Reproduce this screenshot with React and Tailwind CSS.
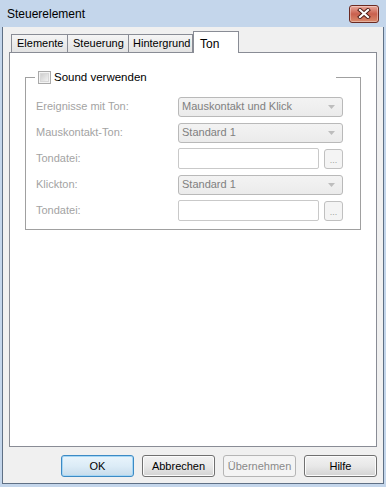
import React from "react";

function CloseBtn() {
  return (
    <div className="w-[30px] h-[18px] rounded-[3px] border border-[#6b2a22] bg-gradient-to-b from-[#e8a89c] via-[#c9604e] to-[#d98a6c] flex items-center justify-center shadow-[inset_0_0_0_1px_rgba(255,255,255,0.35)]">
      <svg width="14" height="11" viewBox="0 0 14 11">
        <path d="M3 2 L11 9 M11 2 L3 9" stroke="#4a1a14" strokeWidth="4" strokeLinecap="square" />
        <path d="M3 2 L11 9 M11 2 L3 9" stroke="#ffffff" strokeWidth="2.2" strokeLinecap="square" />
      </svg>
    </div>
  );
}

function Combo({ text }) {
  return (
    <div className="w-[165px] h-[20px] border border-[#b9b9b9] rounded-[3px] bg-gradient-to-b from-[#f3f3f3] to-[#ebebeb] flex items-center justify-between pl-[3px] pr-[7px]">
      <span className="text-[#808080]">{text}</span>
      <svg width="7" height="4" viewBox="0 0 7 4">
        <path d="M0 0 L7 0 L3.5 4 Z" fill="#bdbdbd" />
      </svg>
    </div>
  );
}

function FileRow() {
  return (
    <div className="flex items-center">
      <div className="w-[141px] h-[21px] border border-[#c9c9c9] rounded-[2px] bg-white" />
      <div className="ml-[5px] w-[19px] h-[20px] border border-[#c0c0c0] rounded-[3px] bg-[#f4f4f4] flex items-end justify-center pb-[3px]">
        <span className="text-[#a0a0a0] text-[9px] leading-[9px]">...</span>
      </div>
    </div>
  );
}

function Row({ label, children }) {
  return (
    <div className="flex items-center h-[21px]">
      <span className="w-[142px] text-[#a3a3a3]">{label}</span>
      {children}
    </div>
  );
}

function Btn({ children, kind }) {
  if (kind === "default") {
    return (
      <div className="w-[73px] h-[22px] rounded-[3px] border border-[#3c8ac4] bg-gradient-to-b from-[#e9f4fb] via-[#dcecf7] to-[#c7dceb] shadow-[inset_0_0_0_1px_#a5d6f5] flex items-center justify-center">
        {children}
      </div>
    );
  }
  if (kind === "disabled") {
    return (
      <div className="w-[73px] h-[22px] rounded-[3px] border border-[#b5b5b5] bg-[#f4f4f4] flex items-center justify-center text-[#8a8a8a]">
        {children}
      </div>
    );
  }
  return (
    <div className="w-[73px] h-[22px] rounded-[3px] border border-[#707070] bg-gradient-to-b from-[#f2f2f2] via-[#e8e8e8] to-[#d3d3d3] shadow-[inset_0_0_0_1px_#fcfcfc] flex items-center justify-center">
      {children}
    </div>
  );
}

export default function App() {
  return (
    <div className="w-[386px] h-[487px] bg-[#c4d6eb] flex flex-col px-[2px] pb-[3px] font-['Liberation_Sans',Arial,sans-serif] text-[11px] text-black overflow-hidden">
      <div className="h-[27px] shrink-0 flex items-center justify-between pl-[5px] pr-[5px]">
        <span className="text-[12px] leading-none">Steuerelement</span>
        <CloseBtn />
      </div>
      <div className="flex-1 bg-[#f0f0f0] border-x border-b border-[#5f7085] flex flex-col px-[6px]">
        <div className="mt-[4px] h-[21px] flex items-end pl-[2px] shrink-0">
          <div className="w-[56px] h-[18px] border-l border-t border-[#898c95] bg-gradient-to-b from-[#f5f5f5] to-[#e3e3e3] flex items-center pl-[5px]">Elemente</div>
          <div className="w-[61px] h-[18px] border-l border-t border-[#898c95] bg-gradient-to-b from-[#f5f5f5] to-[#e3e3e3] flex items-center pl-[5px]">Steuerung</div>
          <div className="w-[65px] h-[18px] border-l border-t border-r border-[#898c95] bg-gradient-to-b from-[#f5f5f5] to-[#e3e3e3] flex items-center pl-[4px]">Hintergrund</div>
          <div className="relative z-10 w-[46px] h-[22px] -mb-[1px] border-l border-t border-r border-[#898c95] bg-white flex items-start pt-[3px] pl-[6px] text-[12px]">Ton</div>
        </div>
        <div className="flex-1 border border-[#898c95] bg-white flex flex-col">
          <div className="mt-[24px] mx-[15px] h-[153px] border border-[#a0a0a0] flex flex-col">
            <div className="-mt-[8px] ml-[9px] w-[301px] h-[15px] bg-white flex items-center pl-[3px]">
              <div className="w-[13px] h-[13px] border border-[#a9a9a9] bg-[#f4f4f4] flex items-center justify-center">
                <div className="w-[9px] h-[9px] bg-gradient-to-br from-[#cfcfcf] to-[#f2f2f2] border border-[#d8d8d8]" />
              </div>
              <span className="ml-[3px] text-[11.5px]">Sound verwenden</span>
            </div>
            <div className="mt-[11px] pl-[10px] flex flex-col gap-[5px]">
              <Row label="Ereignisse mit Ton:"><Combo text="Mauskontakt und Klick" /></Row>
              <Row label="Mauskontakt-Ton:"><Combo text="Standard 1" /></Row>
              <Row label="Tondatei:"><FileRow /></Row>
              <Row label="Klickton:"><Combo text="Standard 1" /></Row>
              <Row label="Tondatei:"><FileRow /></Row>
            </div>
          </div>
        </div>
        <div className="mt-[8px] mb-[6px] h-[22px] flex justify-end gap-[8px] shrink-0">
          <Btn kind="default">OK</Btn>
          <Btn>Abbrechen</Btn>
          <Btn kind="disabled">Übernehmen</Btn>
          <Btn>Hilfe</Btn>
        </div>
      </div>
    </div>
  );
}
